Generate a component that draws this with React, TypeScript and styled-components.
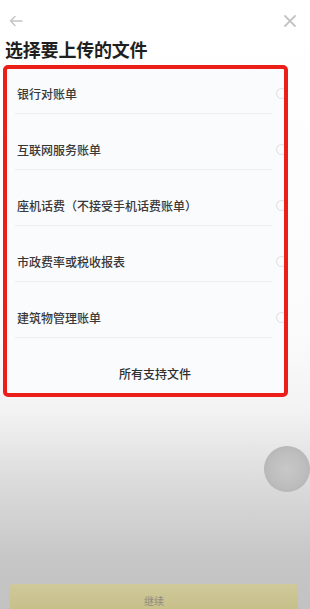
import React from "react";
import styled, { createGlobalStyle } from "styled-components";

const Global = createGlobalStyle`
  html, body { margin: 0; padding: 0; }
  body { width: 310px; height: 609px; overflow: hidden; font-family: "Noto Sans CJK SC", "Noto Sans", sans-serif; }
`;

const Page = styled.div`
  position: relative;
  height: 609px;
  display: flex;
  flex-direction: column;
  background: linear-gradient(
    to bottom,
    #ffffff 0px,
    #fbfbfb 330px,
    #f3f3f3 410px,
    #dcdcdc 480px,
    #c6c6c6 560px,
    #c2c2c2 609px
  );
`;

const Header = styled.div`
  display: flex;
  justify-content: space-between;
  align-items: center;
  height: 26px;
  padding: 8px 13px 0 9px;
`;

const IconBtn = styled.span`
  display: flex;
  width: 14px;
  height: 14px;
  color: #c4c4c4;
`;

const Title = styled.h1`
  margin: 3px 0 0 5px;
  font-size: 18px;
  line-height: 24px;
  font-weight: 700;
  color: #1f1f1f;
  letter-spacing: -0.2px;
`;

const CardArea = styled.div`
  position: relative;
  margin: 4px 22px 0 3px;
  height: 332px;
  background: #fafbfc;
  border-radius: 5px;
`;

const List = styled.div`
  display: flex;
  flex-direction: column;
  padding: 0 1px 0 14px;
`;

const Row = styled.div<{ $first?: boolean }>`
  display: flex;
  align-items: center;
  justify-content: space-between;
  height: 17px;
  padding: ${(p) => (p.$first ? "20px" : "27px")} 0 11px;
`;

const Label = styled.span`
  font-size: 12px;
  line-height: 17px;
  font-weight: 500;
  color: #383838;
`;

const Radio = styled.span`
  width: 9px;
  height: 9px;
  border-radius: 50%;
  border: 1px solid #dedede;
`;

const Divider = styled.div`
  height: 1px;
  margin: 0 15px 0 -2px;
  background: #eeeeee;
`;

const Footer = styled.div`
  text-align: center;
  padding: 27px 0 0 19px;
  font-size: 12px;
  line-height: 17px;
  font-weight: 500;
  color: #2e2e2e;
`;

const Frame = styled.div`
  position: absolute;
  inset: 0;
  border: 4px solid #ec1e1a;
  border-radius: 5px;
  pointer-events: none;
`;

const Spacer = styled.div`
  flex: 1;
`;

const Bubble = styled.div`
  position: absolute;
  left: 264px;
  top: 446px;
  width: 46px;
  height: 46px;
  border-radius: 50%;
  background: radial-gradient(circle at 50% 50%, #c8c8c8 0, #bdbdbd 55%, #adadad 100%);
`;

const Button = styled.div`
  margin: 0 12px 0 10px;
  height: 25px;
  display: flex;
  justify-content: center;
  align-items: flex-end;
  background: linear-gradient(to bottom, #cfc99b, #c7c08a);
  border-radius: 3px 3px 0 0;
  font-size: 10px;
  line-height: 16px;
  color: #8e8c80;
`;

const items = [
  "银行对账单",
  "互联网服务账单",
  "座机话费（不接受手机话费账单）",
  "市政费率或税收报表",
  "建筑物管理账单",
];

export default function App() {
  return (
    <>
      <Global />
      <Page>
        <Header>
          <IconBtn>
            <svg width="14" height="14" viewBox="0 0 14 14" fill="none" stroke="currentColor" strokeWidth="1.4" strokeLinecap="round" strokeLinejoin="round">
              <path d="M13 7H1.5M6 2.5L1.5 7 6 11.5" />
            </svg>
          </IconBtn>
          <IconBtn>
            <svg width="14" height="14" viewBox="0 0 14 14" fill="none" stroke="currentColor" strokeWidth="1.8" strokeLinecap="round">
              <path d="M2 2l10 10M12 2L2 12" />
            </svg>
          </IconBtn>
        </Header>
        <Title>选择要上传的文件</Title>
        <CardArea>
          <List>
            {items.map((t, i) => (
              <React.Fragment key={t}>
                <Row $first={i === 0}>
                  <Label>{t}</Label>
                  <Radio />
                </Row>
                <Divider />
              </React.Fragment>
            ))}
          </List>
          <Footer>所有支持文件</Footer>
          <Frame />
        </CardArea>
        <Spacer />
        <Button>继续</Button>
        <Bubble />
      </Page>
    </>
  );
}
